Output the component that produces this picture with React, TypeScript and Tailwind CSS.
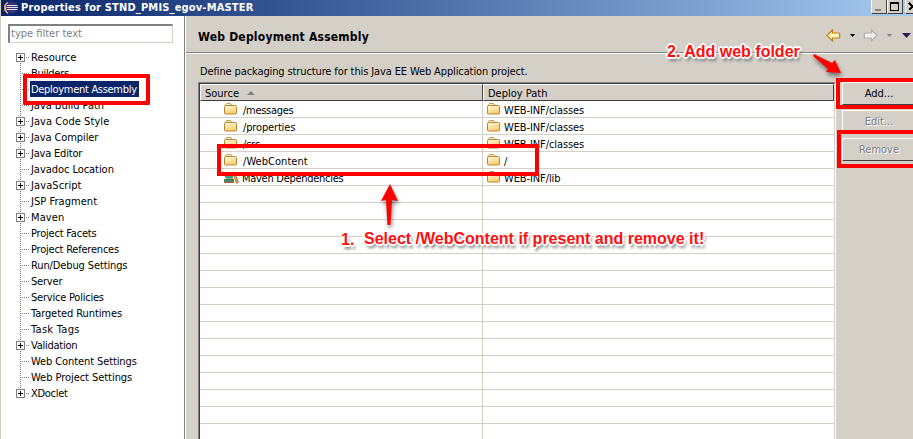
import React from "react";

const UI = "font-['DejaVu_Sans_Condensed','DejaVu_Sans',sans-serif]";

type Node = { label: string; expandable?: boolean; selected?: boolean; track: string };

const nodes: Node[] = [
  { label: "Resource", expandable: true, track: "tracking-[0px]" },
  { label: "Builders", track: "tracking-[-0.3px]" },
  { label: "Deployment Assembly", selected: true, track: "tracking-[-0.3px]" },
  { label: "Java Build Path", track: "tracking-[-0.05px]" },
  { label: "Java Code Style", expandable: true, track: "tracking-[0.06px]" },
  { label: "Java Compiler", expandable: true, track: "tracking-[-0.1px]" },
  { label: "Java Editor", expandable: true, track: "tracking-[-0.2px]" },
  { label: "Javadoc Location", track: "tracking-[-0.05px]" },
  { label: "JavaScript", expandable: true, track: "tracking-[0.1px]" },
  { label: "JSP Fragment", track: "tracking-[0.05px]" },
  { label: "Maven", expandable: true, track: "tracking-[0.1px]" },
  { label: "Project Facets", track: "tracking-[-0.2px]" },
  { label: "Project References", track: "tracking-[-0.22px]" },
  { label: "Run/Debug Settings", track: "tracking-[-0.12px]" },
  { label: "Server", track: "tracking-[-0.2px]" },
  { label: "Service Policies", track: "tracking-[-0.22px]" },
  { label: "Targeted Runtimes", track: "tracking-[-0.08px]" },
  { label: "Task Tags", track: "tracking-[0.3px]" },
  { label: "Validation", expandable: true, track: "tracking-[-0.25px]" },
  { label: "Web Content Settings", track: "tracking-[-0.1px]" },
  { label: "Web Project Settings", track: "tracking-[-0.05px]" },
  { label: "XDoclet", expandable: true, track: "tracking-[-0.3px]" },
];

const rows: [string, string][] = [
  ["/messages", "WEB-INF/classes"],
  ["/properties", "WEB-INF/classes"],
  ["/src", "WEB-INF/classes"],
  ["/WebContent", "/"],
  ["Maven Dependencies", "WEB-INF/lib"],
  ...Array.from({ length: 15 }, () => ["", ""] as [string, string]),
];

const sourceTrack = ["tracking-[-0.3px]", "tracking-[-0.15px]", "tracking-[-0.2px]", "tracking-[0.05px]", "tracking-[-0.28px]"];

function Folder() {
  return (
    <svg width="14" height="13" viewBox="0 0 14 13" className="shrink-0">
      <defs>
        <linearGradient id="folderFill" x1="0" y1="0" x2="0.4" y2="1">
          <stop offset="0" stopColor="#fffbe0" />
          <stop offset="1" stopColor="#f9cf70" />
        </linearGradient>
      </defs>
      <path d="M1.500 3.500V1.500L2.500 .5h4L8 2.500V4z" fill="#fdf0c0" stroke="#c39a4b" />
      <rect x=".5" y="2.500" width="12" height="8.500" rx="1" fill="url(#folderFill)" stroke="#bd8434" />
    </svg>
  );
}

function Books() {
  return (
    <svg width="15" height="13" viewBox="0 0 15 13" className="shrink-0">
      <path d="M2 1h6v3H2z" fill="#c7564a" />
      <path d="M1 4h8v3H1z" fill="#3f9c86" />
      <path d="M0 8h10v3H0z" fill="#2d8a73" />
      <path d="M0 10.500h10v1.500H0z" fill="#b4603f" />
      <path d="M2 7.500h7" stroke="#c98a6a" />
      <path d="M8.500 1.500l2-.7 4 10.500-2 .9z" fill="#e0a030" stroke="#ae6720" strokeWidth=".7" />
    </svg>
  );
}

function TreeLines({ node, first, last }: { node: Node; first: boolean; last: boolean }) {
  return (
    <svg width="14" height="16" viewBox="0 0 14 16" className="shrink-0" shapeRendering="crispEdges">
      <path d={`M4.500 ${first ? 8 : 0}V${last ? 8 : 16}`} stroke="#808080" strokeDasharray="1 1" />
      <path d="M4 8.500H13" stroke="#808080" strokeDasharray="1 1" />
      {node.expandable && (
        <>
          <rect x=".5" y="4.500" width="8" height="8" fill="#fff" stroke="#808080" />
          <path d="M2 8.500h5M4.500 6v5" stroke="#000" />
        </>
      )}
    </svg>
  );
}

function WinButton({ children }: { children: React.ReactNode }) {
  return (
    <div className="h-[14px] w-4 shrink-0 border-r border-b border-l border-r-[#404040] border-b-[#404040] border-l-white bg-[#d4d0c8]">
      <svg width="14" height="13" viewBox="0 0 14 13" shapeRendering="crispEdges">{children}</svg>
    </div>
  );
}

function NavArrow({ dim, back }: { dim?: boolean; back?: boolean }) {
  return (
    <svg width="15" height="13" viewBox="0 0 15 13" className={back ? "" : "-scale-x-100"}>
      <path
        d="M1 6.500L6.500 1v3h6.200q1 0 1 1v3q0 1-1 1H6.500v3z"
        fill={dim ? "#f0f0f0" : "#fff3b8"}
        stroke={dim ? "#b0b0b0" : "#bd8116"}
        strokeWidth="1.200"
      />
    </svg>
  );
}

function PushButton({ label, disabled, className }: { label: string; disabled?: boolean; className: string }) {
  return (
    <div
      className={`flex h-[23px] w-[74px] items-center justify-center border border-t-white border-l-white border-r-[#404040] border-b-[#404040] pt-0.5 text-[11px] ${
        disabled ? "text-[#808080] [text-shadow:1px_1px_0_#fff]" : "text-black"
      } ${className}`}
    >
      {label}
    </div>
  );
}

const note =
  "absolute whitespace-nowrap font-['Liberation_Sans',Arial,sans-serif] font-bold text-[16px] text-[#ff0f0f] leading-5 [text-shadow:-1px_-1px_0_#fff,1px_-1px_0_#fff,-1px_1px_0_#fff,1px_1px_0_#fff,-2px_0_0_#fff,2px_0_0_#fff,0_2px_0_#fff,0_-2px_0_#fff,2px_4px_3px_#777]";

export default function App() {
  return (
    <div className={`relative flex h-[439px] w-[913px] flex-col overflow-hidden bg-[#d4d0c8] pl-px text-[11px] text-black ${UI}`}>
      <header className="flex h-4 shrink-0 items-start bg-linear-to-r from-[#0a246a] to-[#a6caf0]">
        <svg width="14" height="14" viewBox="0 0 14 14" className="mt-px ml-[3px] shrink-0">
          <circle cx="7.500" cy="6.500" r="6" fill="#39307c" />
          <path d="M4 1A6.300 6.300 0 0 0 4 12.500A8 8 0 0 1 4 1" fill="#f19a35" stroke="#f5c17b" strokeWidth=".8" />
          <path d="M3 4.500h10.500M2.500 6.500H14M3 8.500h10.500" stroke="#e6e3f3" strokeWidth="1" />
        </svg>
        <h1 className="ml-[3px] pt-px text-[11px] leading-[14px] font-bold tracking-[0.17px] whitespace-nowrap text-white">
          Properties for STND_PMIS_egov-MASTER
        </h1>
        <div className="ml-auto flex shrink-0">
          <WinButton><path d="M3 10h6" stroke="#808080" strokeWidth="2" /></WinButton>
          <WinButton><path d="M2.500 2.500h8v8h-8zM2 3.500h9" fill="none" stroke="#000" /></WinButton>
          <div className="ml-0.5 w-2 overflow-hidden">
            <WinButton><path d="M3 3l7 7M10 3l-7 7" stroke="#000" strokeWidth="1.500" /></WinButton>
          </div>
        </div>
      </header>

      <main className="flex min-h-0 flex-1">
        <aside className="w-[184px] shrink-0 border-r border-[#808080] bg-white pt-2">
          <div className="ml-[7px] flex h-[19px] w-[165px] items-center border border-t-2 border-l-2 border-[#808080] border-r-[#d4d0c8] border-b-[#d4d0c8] pl-px text-[#808080]">
            type filter text
          </div>
          <ul className="mt-1.5 ml-[15px]">
            {nodes.map((n, i) => (
              <li key={n.label} className="flex h-4 items-center">
                <TreeLines node={n} first={i === 0} last={i === nodes.length - 1} />
                <span className={`h-4 pt-px leading-[15px] whitespace-nowrap ${n.track} ${n.selected ? "bg-[#0a246a] pr-0.5 pl-px text-white" : "pl-px"}`}>
                  {n.label}
                </span>
              </li>
            ))}
          </ul>
        </aside>

        <section className="flex min-w-0 flex-1 flex-col border-l border-white">
          <div className="flex h-[37px] shrink-0 items-center justify-between border-b border-[#808080] pl-3">
            <h2 className="pt-1.5 text-[12px] font-bold tracking-[0.22px] whitespace-nowrap">Web Deployment Assembly</h2>
            <div className="mr-[2px] flex items-center pt-0.5">
              <NavArrow back />
              <svg width="5" height="3" className="ml-[9px]"><path d="M0 0h5L2.500 3z" /></svg>
              <span className="w-2" />
              <NavArrow dim />
              <svg width="5" height="3" className="ml-[9px]"><path d="M0 0h5L2.500 3z" fill="#808080" /></svg>
              <svg width="9" height="5" className="ml-[10px]"><path d="M0 0h9L4.500 5z" fill="#2f1a50" /></svg>
            </div>
          </div>
          <div className="h-px shrink-0 bg-white" />
          <p className="mt-[9px] h-4 shrink-0 pt-px pl-[14px] leading-4 tracking-[-0.12px] whitespace-nowrap">
            Define packaging structure for this Java EE Web Application project.
          </p>
          <div className="mt-[3px] flex min-h-0 flex-1 overflow-hidden pl-3">
            <div className="w-[638px] shrink-0 border-t border-l border-[#808080] border-r border-r-white">
              <div className="h-full border-t border-l border-[#404040] border-r border-r-[#d4d0c8] bg-white">
                <div className="flex h-[17px] bg-[#d4d0c8] leading-[15px]">
                  <div className="flex w-[283px] items-center border-t border-r border-b border-l border-t-white border-l-white border-r-[#404040] border-b-[#404040] pt-px pl-1">
                    Source
                    <svg width="8" height="4" className="ml-[8px]"><path d="M0 4L4 0l4 4z" fill="#808080" /></svg>
                  </div>
                  <div className="flex flex-1 items-center border-t border-r border-b border-l border-t-white border-l-white border-r-[#404040] border-b-[#404040] pt-px pl-1">
                    Deploy Path
                  </div>
                </div>
                {rows.map(([source, path], i) => (
                  <div key={i} className="flex h-[17px] leading-4">
                    <div className="flex w-[283px] items-center border-r border-b border-[#d4d0c8] pl-6">
                      {source && (i === 4 ? <Books /> : <Folder />)}
                      <span className={`pt-[3px] ${i === 4 ? "ml-[3px]" : "ml-[5px]"} ${sourceTrack[i] ?? ""}`}>{source}</span>
                    </div>
                    <div className="flex flex-1 items-center border-b border-[#d4d0c8] pl-1">
                      {path && <Folder />}
                      <span className="ml-[3px] pt-[3px] tracking-[-0.1px]">{path}</span>
                    </div>
                  </div>
                ))}
              </div>
            </div>
            <div className="ml-1.5 shrink-0">
              <PushButton label="Add..." className="" />
              <PushButton label="Edit..." disabled className="mt-[5px]" />
              <PushButton label="Remove" disabled className="mt-[5px]" />
            </div>
          </div>
        </section>
      </main>

      <div className="absolute top-[74px] left-[23px] h-[31px] w-[127px] rounded-[1px] border-4 border-[#f00]" />
      <div className="absolute top-[144px] left-[217px] h-[32px] w-[322px] border-4 border-[#f00]" />
      <div className="absolute top-[78px] left-[836px] h-[31px] w-[90px] border-4 border-[#f00]" />
      <div className="absolute top-[130px] left-[837px] h-[38px] w-[90px] border-4 border-[#f00]" />
      <svg width="913" height="439" className="absolute top-0 left-0 [filter:drop-shadow(1px_3px_2px_#0007)]">
        <path d="M390 184l8 17-6-1-1.500 25h-3L386 200l-5 1z" fill="#f00" />
        <path d="M814 54l18 9 3-3 6 13-15-1 2-3-15-13z" fill="#f00" />
      </svg>
      <div className={`${note} top-[42px] left-[667px]`}>2. Add web folder</div>
      <div className={`${note} top-[230px] left-[341px]`}>1.</div>
      <div className={`${note} top-[229px] left-[364px]`}>Select /WebContent if present and remove it!</div>
    </div>
  );
}
